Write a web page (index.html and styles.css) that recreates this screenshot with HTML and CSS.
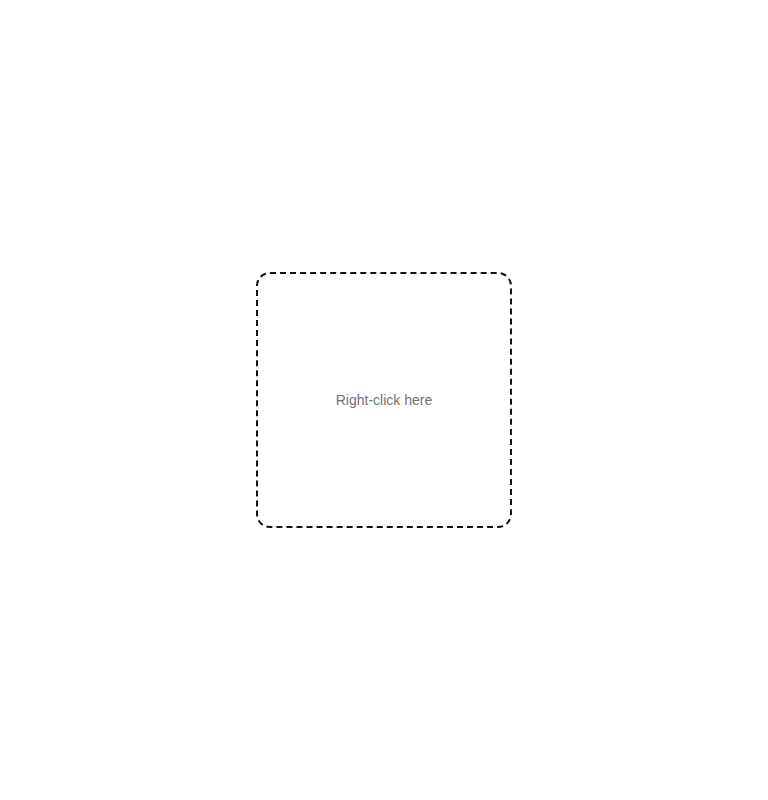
FILE: index.html
```html
<!DOCTYPE html>
<html>
<head>
<meta charset="utf-8">
<link rel="stylesheet" href="styles.css">
</head>
<body>
<main class="page">
  <div class="zone">Right-click here</div>
</main>
</body>
</html>
```
FILE: styles.css
```css
html, body {
  margin: 0;
  padding: 0;
  background: #ffffff;
}
.page {
  width: 768px;
  height: 800px;
  display: flex;
  align-items: center;
  justify-content: center;
}
.zone {
  box-sizing: border-box;
  width: 256px;
  height: 256px;
  border: 2px dashed #111111;
  border-radius: 14px;
  display: flex;
  align-items: center;
  justify-content: center;
  font-family: "Liberation Sans", Arial, sans-serif;
  font-size: 14px;
  color: #737373;
}
```
